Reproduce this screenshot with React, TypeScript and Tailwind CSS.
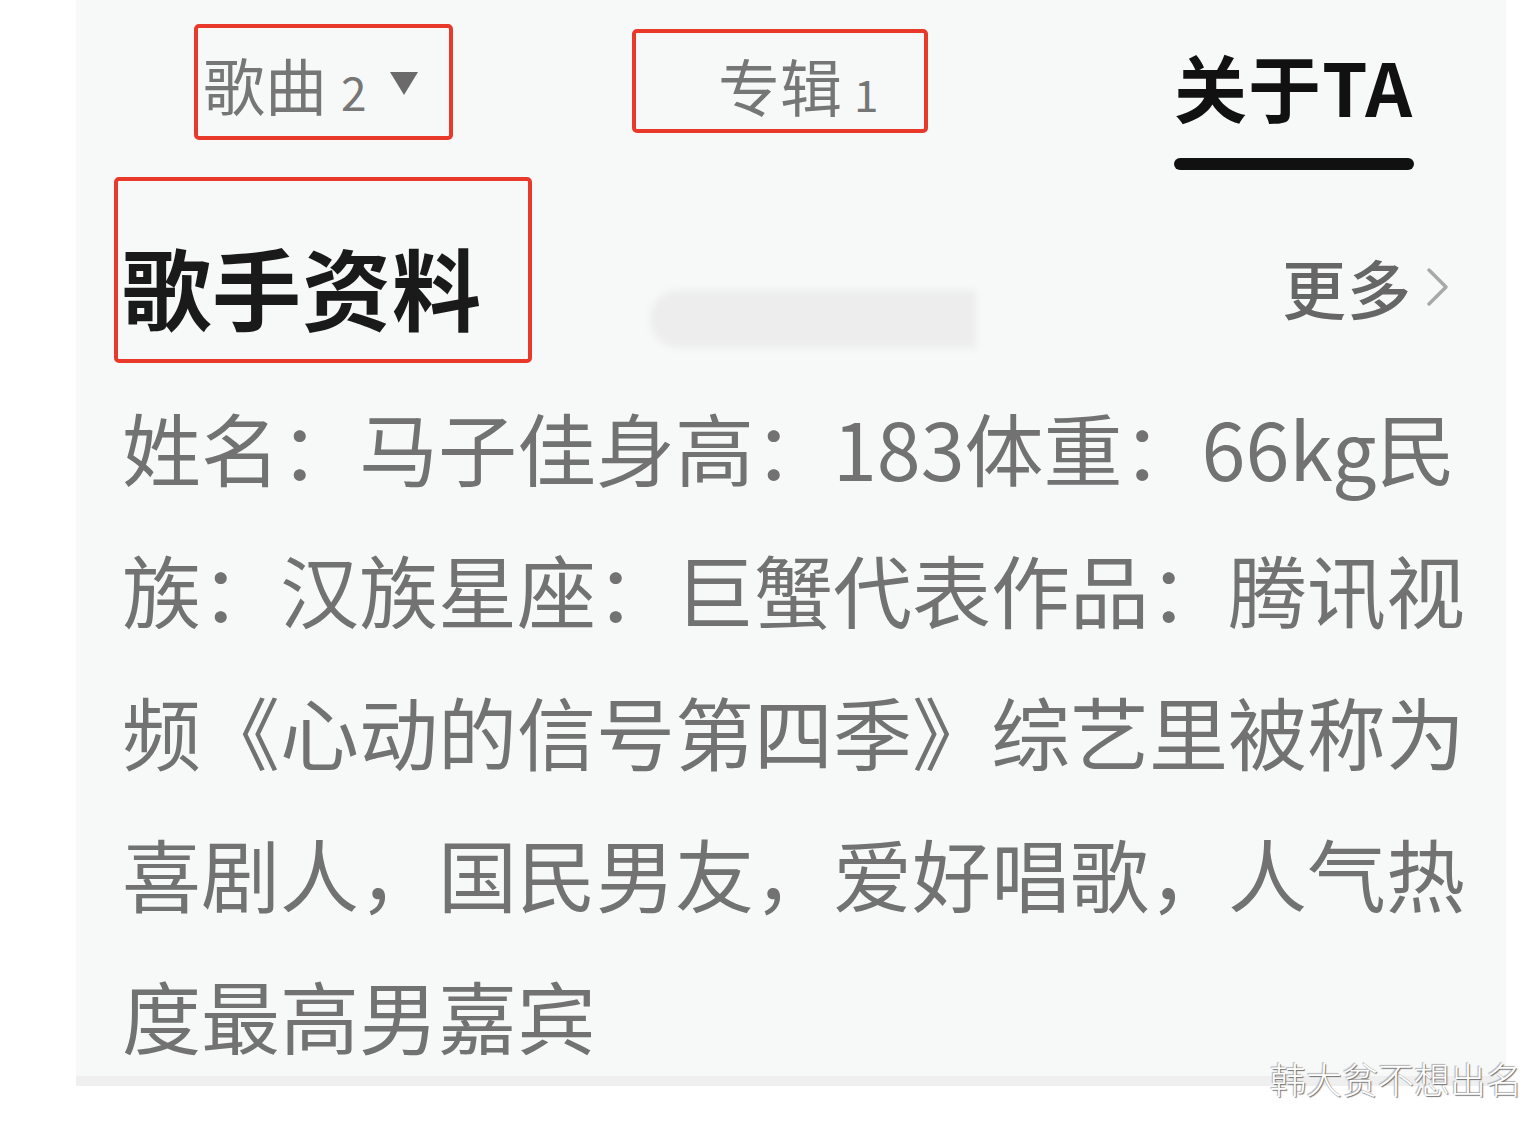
const cjk = { fontFamily: '"Noto Sans CJK SC", "Noto Sans", sans-serif' };

const bioLines = [
  '姓名：马子佳身高：183体重：66kg民',
  '族：汉族星座：巨蟹代表作品：腾讯视',
  '频《心动的信号第四季》综艺里被称为',
  '喜剧人，国民男友，爱好唱歌，人气热',
  '度最高男嘉宾',
];

const App = () => {
  return (
    <div className="relative w-full h-[1124px] bg-white overflow-hidden" style={cjk}>
      <div className="ml-[76px] w-[1430px] h-[1086px] bg-[#f7f8f8] border-b-[10px] border-[#efefef] overflow-hidden">
        {/* Tabs */}
        <div className="flex items-start h-[177px]">
          <div className="ml-[118px] mt-[24px] w-[259px] h-[116px] border-[4px] border-[#e8392b] rounded-[5px] flex items-baseline pl-[5px] pt-[25px] text-[#767676]">
            <span className="text-[62px] leading-none">歌曲</span>
            <span className="text-[46px] leading-none ml-[14px]">2</span>
            <svg className="ml-[22px] self-start mt-[18px]" width="30" height="25" viewBox="0 0 30 25">
              <path d="M1 1 H29 L15 24 Z" fill="#6a6a6a" />
            </svg>
          </div>
          <div className="ml-[179px] mt-[29px] w-[296px] h-[104px] border-[4px] border-[#e8392b] rounded-[5px] flex items-baseline pl-[82px] pt-[21px] text-[#767676]">
            <span className="text-[62px] leading-none">专辑</span>
            <span className="text-[44px] leading-none ml-[12px]">1</span>
          </div>
          <div className="ml-[246px] mt-[49px] flex flex-col items-start">
            <span className="text-[73px] leading-none font-bold text-[#111] tracking-[1px]">关于TA</span>
            <div className="mt-[36px] w-[240px] h-[12px] rounded-full bg-[#111]" />
          </div>
        </div>

        {/* Heading row */}
        <div className="flex items-start h-[199px]">
          <div className="ml-[38px] w-[418px] h-[186px] border-[4px] border-[#e8392b] rounded-[5px] pl-[4px] pt-[60px]">
            <span className="text-[89px] leading-none font-bold text-[#1a1a1a] tracking-[1px]">歌手资料</span>
          </div>
          <div className="ml-[118px] mt-[113px] w-[326px] h-[58px] rounded-l-full bg-[#ededed] blur-[3px]" />
          <div className="ml-auto mr-[56px] mt-[77px] flex items-center text-[#666]">
            <span className="text-[64px] leading-none font-medium tracking-[1px]">更多</span>
            <svg className="ml-[14px] mt-[2px]" width="24" height="40" viewBox="0 0 24 40">
              <path d="M3 3 L20 20 L3 37" fill="none" stroke="#a8a8a8" strokeWidth="3.5" strokeLinecap="round" strokeLinejoin="round" />
            </svg>
          </div>
        </div>

        {/* Bio */}
        <div className="ml-[46px] text-[79px] leading-[142px] text-[#727272] whitespace-nowrap">
          {bioLines.map((line) => (
            <div key={line}>{line}</div>
          ))}
        </div>
      </div>

      {/* Watermark */}
      <div className="absolute left-[1270px] top-[1060px] text-[36px] leading-none font-light text-white [text-shadow:1px_1px_1px_#6f6f6f,-1px_-1px_1px_#b0b0b0]">
        韩大贫不想出名
      </div>
    </div>
  );
};

export default App;
